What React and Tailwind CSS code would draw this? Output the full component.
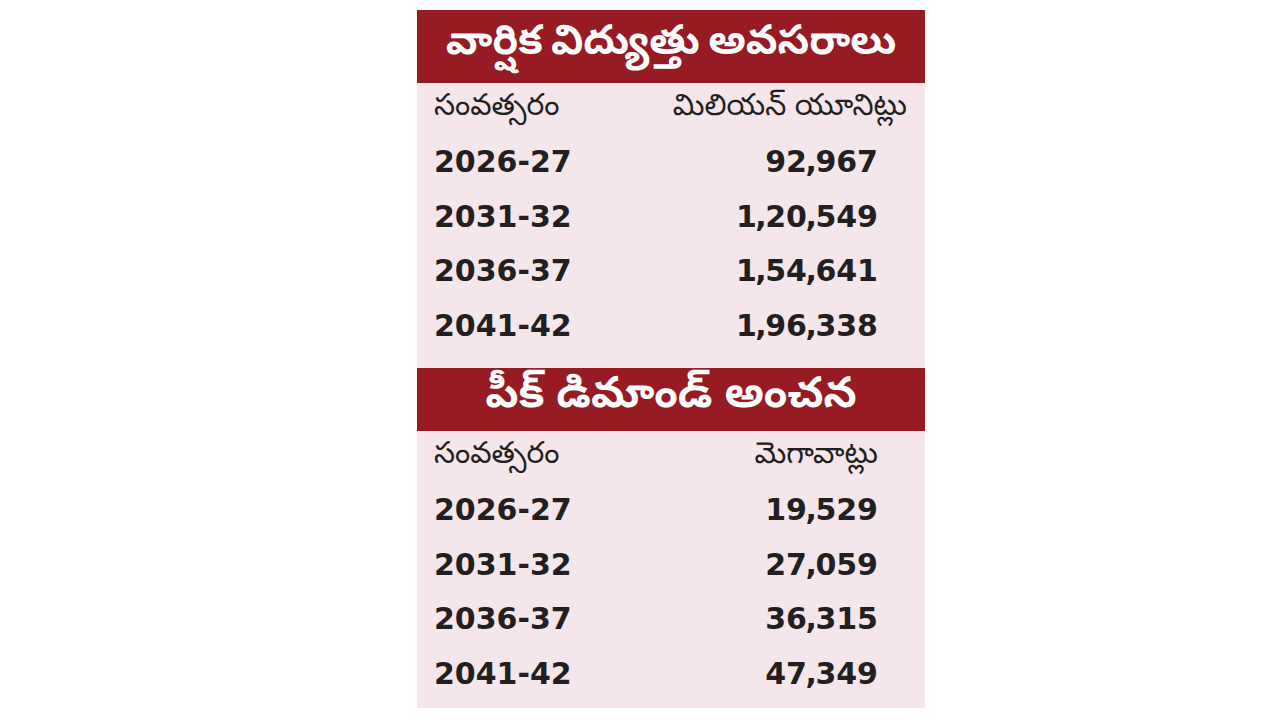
import React from "react";

const energy = [
  ["2026-27", "92,967"],
  ["2031-32", "1,20,549"],
  ["2036-37", "1,54,641"],
  ["2041-42", "1,96,338"],
];

const peak = [
  ["2026-27", "19,529"],
  ["2031-32", "27,059"],
  ["2036-37", "36,315"],
  ["2041-42", "47,349"],
];

const telugu = "[font-family:'Noto_Sans_Telugu','Noto_Sans',sans-serif]";

// commas in the print font are narrower than DejaVu's
function Num({ value }) {
  const parts = value.split(",");
  return (
    <span>
      {parts.map((p, i) => (
        <React.Fragment key={i}>
          {i > 0 && <span className="mx-[-1.5px]">,</span>}
          {p}
        </React.Fragment>
      ))}
    </span>
  );
}

function Section({ title, unit, rows, headH, titleCls, unitCls }) {
  return (
    <div>
      <div className={`${headH} bg-[#961b23] flex items-center justify-center`}>
        <h2 className={`text-white font-bold leading-none ${titleCls} ${telugu}`}>
          {title}
        </h2>
      </div>
      <div className="pl-[17px] pr-[47px]">
        <div className={`h-[52px] flex items-center justify-between text-[#231f20] text-[30px] leading-none ${telugu}`}>
          <span>సంవత్సరం</span>
          <span className={unitCls}>{unit}</span>
        </div>
        {rows.map(([year, value]) => (
          <div
            key={year}
            className="h-[54.5px] flex items-center justify-between text-[#231f20] text-[30px] font-bold leading-none [font-family:'DejaVu_Sans',sans-serif]"
          >
            <span>{year}</span>
            <Num value={value} />
          </div>
        ))}
      </div>
    </div>
  );
}

export default function App() {
  return (
    <div className="w-[1280px] h-[720px] bg-white pt-[10px] pl-[417px]">
      <div className="w-[508px] h-[698px] bg-[#f4e6ea]">
        <Section
          title="వార్షిక విద్యుత్తు అవసరాలు"
          unit="మిలియన్ యూనిట్లు"
          rows={energy}
          headH="h-[73px]"
          titleCls="text-[41px] [word-spacing:-3px]"
          unitCls="mr-[-29px]"
        />
        <div className="h-[15px]" />
        <Section
          title="పీక్ డిమాండ్ అంచన"
          unit="మెగావాట్లు"
          rows={peak}
          headH="h-[63px]"
          titleCls="text-[43px]"
          unitCls=""
        />
      </div>
    </div>
  );
}
